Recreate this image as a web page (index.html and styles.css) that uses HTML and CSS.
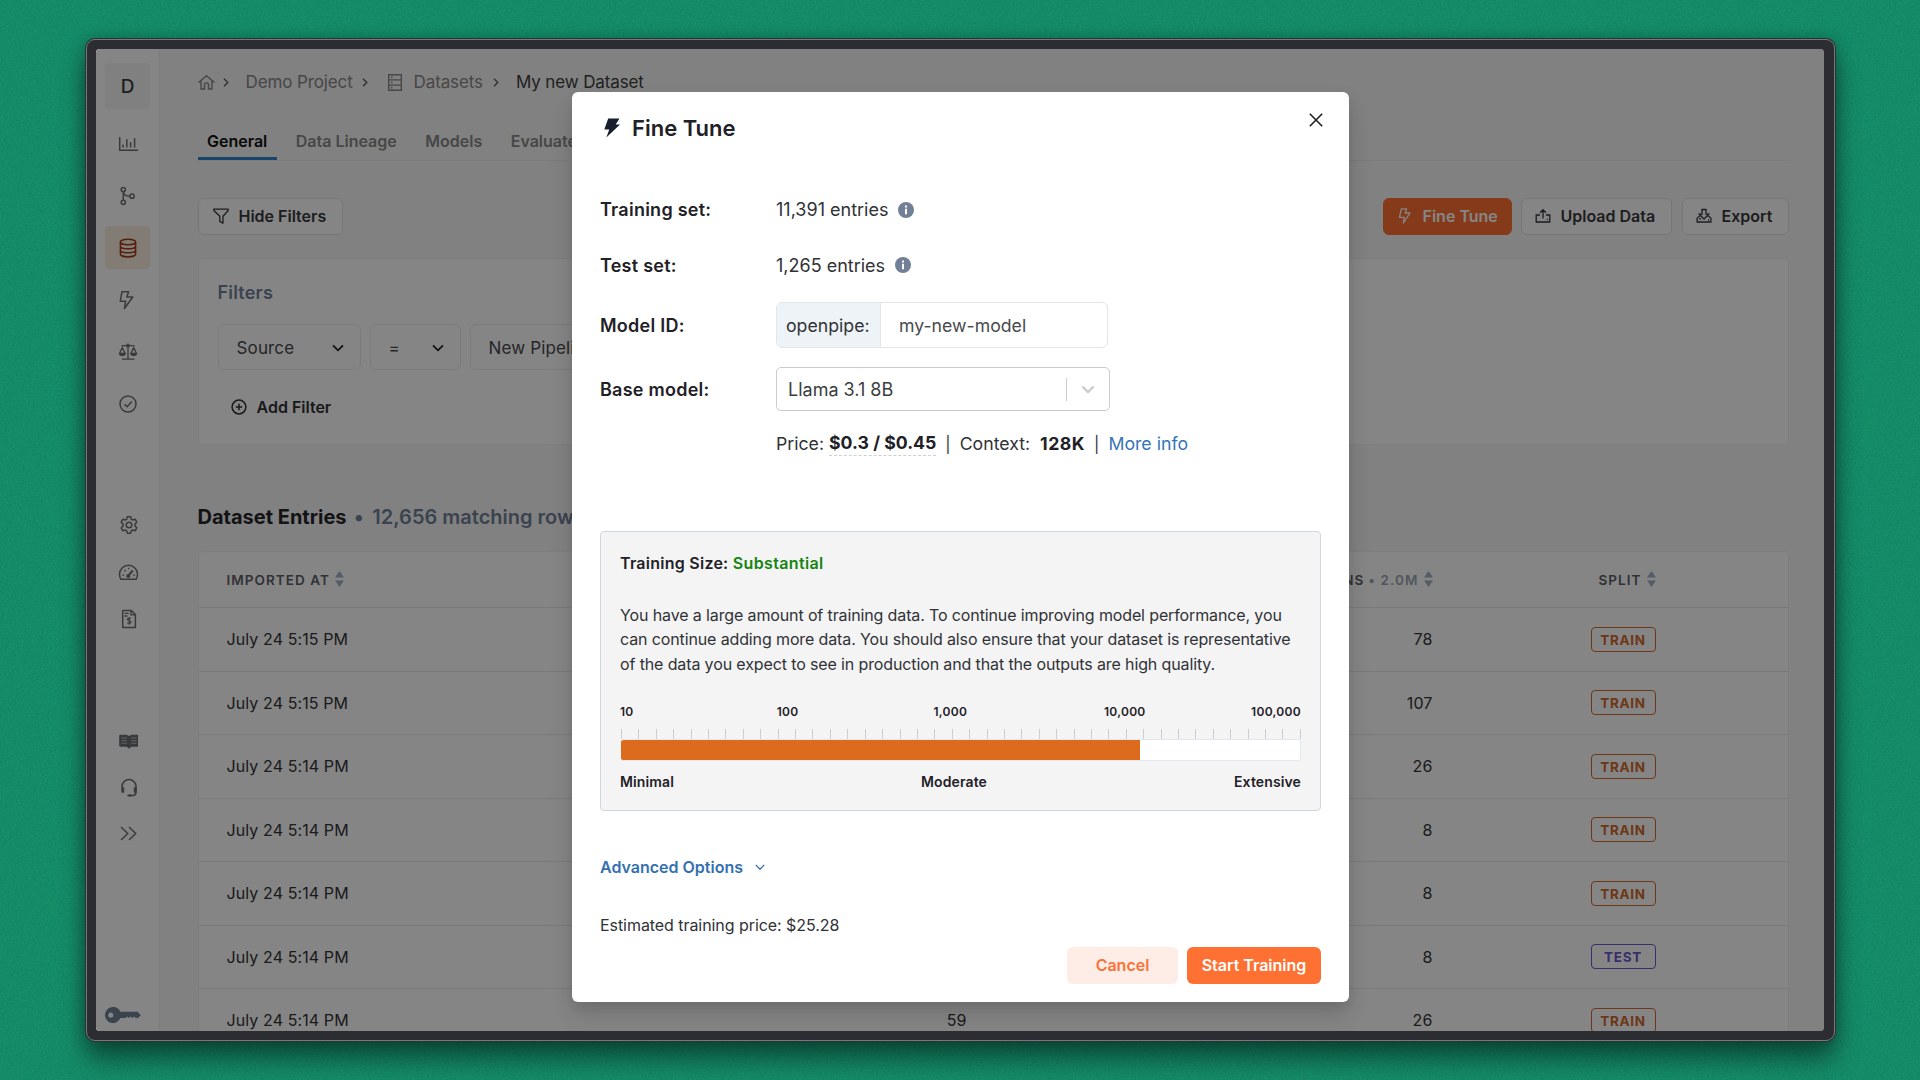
FILE: index.html
```html
<!DOCTYPE html>
<html lang="en">
<head>
    <meta charset="UTF-8">
    <meta name="viewport" content="width=device-width, initial-scale=1.0">
    <title>My new Dataset</title>
    <link rel="stylesheet" href="styles.css">
</head>
<body>
    <svg class="grain" width="1920" height="1080">
        <filter id="noise"><feTurbulence type="fractalNoise" baseFrequency="0.6" numOctaves="2"/><feColorMatrix type="matrix" values="0 0 0 0 0  0 0 0 0 0  0 0 0 0 0  1.2 0 0 0 -0.3"/></filter>
        <rect width="1920" height="1080" filter="url(#noise)"/>
    </svg>

    <div class="window">
        <div class="screen">
            <!-- Sidebar -->
            <nav class="sidebar">
                <div class="project-initial">D</div>
                <div class="nav-group nav-main">
                    <a class="nav-item"><svg viewBox="0 0 20 20"><path d="M1.7 3v13.2H20" /><path d="M5 13.5v-3M8.8 13.5V5.2M12.6 13.5V8.2M16.6 13.5V4"/></svg></a>
                    <a class="nav-item"><svg viewBox="0 0 20 20"><circle cx="5.3" cy="3.6" r="2.1"/><circle cx="5.3" cy="16.3" r="2.1"/><circle cx="14" cy="10.2" r="2.1"/><path d="M5.3 5.7v8.5M5.5 6c.4 3 2.5 4.2 6.3 4.2"/></svg></a>
                    <a class="nav-item active"><svg viewBox="0 0 20 20"><ellipse cx="10" cy="4" rx="7.6" ry="2.8"/><path d="M2.4 4v12c0 1.6 3.4 2.9 7.6 2.9s7.6-1.3 7.6-2.9V4M2.4 8c0 1.6 3.4 2.8 7.6 2.8s7.6-1.2 7.6-2.8M2.4 12c0 1.6 3.4 2.8 7.6 2.8s7.6-1.2 7.6-2.8"/></svg></a>
                    <a class="nav-item"><svg viewBox="0 0 20 20"><path d="M4 1.7h6.6L8.8 7H14.800L6.500 18.500 7.600 11.300H2.200z" stroke-linejoin="round"/></svg></a>
                    <a class="nav-item"><svg viewBox="0 0 20 20"><path d="M3.500 3.700H16.500M10 3.700V17M4 17.200h12.500" stroke-width="1.300"/><circle cx="10" cy="3.500" r="1.300" stroke-width="1.200"/><path d="M4.300 5.500 1.500 11.500h5.600zM15.700 5.500l-2.800 6h5.600z" stroke-width="1.300"/><path d="M.9 11.200h6.800c-.2 1.900-1.500 2.900-3.400 2.900s-3.200-1-3.400-2.900zM12.300 11.200h6.800c-.2 1.900-1.500 2.900-3.400 2.900s-3.200-1-3.400-2.900z" fill="currentColor" stroke="none"/></svg></a>
                    <a class="nav-item"><svg viewBox="0 0 20 20"><circle cx="10" cy="10" r="8"/><path d="m6.500 10.200 2.600 2.500 4.700-5.200"/></svg></a>
                </div>
                <div class="nav-group nav-settings">
                    <a class="nav-item"><svg viewBox="0 0 20 20"><circle cx="11" cy="10" r="2.800"/><path d="M9.300 1.800h3.400l.5 2.300 1.500.9 2.400-.8 1.700 3-1.800 1.700v2.200l1.800 1.700-1.700 3-2.400-.8-1.500.9-.5 2.300H9.300l-.5-2.300-1.500-.9-2.400.8-1.700-3L5 11.100V8.900L3.200 7.200l1.700-3 2.400.8 1.500-.9z" stroke-linejoin="round"/></svg></a>
                    <a class="nav-item"><svg viewBox="0 0 20 20"><path d="M2.900 17.300C2 15.800 1.500 14.200 1.500 12.300a9 9 0 0 1 18 0c0 1.900-.5 3.500-1.400 5z" stroke-linejoin="round"/><path d="m10.500 13.500 4.300-5" stroke-width="2"/><circle cx="10.300" cy="14" r="1.300" fill="currentColor"/><path d="M4.500 13.200h1.500M15.500 13.200H17M6.300 8.700h1.500M10 6.500h1.300" stroke-width="1.600"/></svg></a>
                    <a class="nav-item"><svg viewBox="0 0 20 20"><path d="M4.700 1.500h8.600l4.100 4.100v12.900H4.700z" stroke-linejoin="round"/><path d="M13 1.500v4.300h4.400M6.500 4.300h4.200M6.500 7h3" stroke-width="1.300"/><path d="M12.900 9.600c-1-.8-3.400-.7-3.400.8 0 1.600 3.500 1 3.500 2.700 0 1.500-2.600 1.600-3.700.6M11.200 8.300v7.400" stroke-width="1.200"/></svg></a>
                </div>
                <div class="nav-group nav-help">
                    <a class="nav-item"><svg viewBox="0 0 20 20"><path d="M2.500 3.700h6.300L11 5l2.200-1.300h6.300c.7 0 1.300.5 1.300 1.200v9.600c0 .8-.5 1.200-1.300 1.200h-6.200L11 17.800l-2.300-2.100H2.500c-.8 0-1.300-.4-1.300-1.200V4.900c0-.7.500-1.200 1.300-1.200z" fill="currentColor" stroke="none"/><path d="M3.500 7h5.300M3.500 9.600h5.300M3.500 12.200h5.300M13.200 7h5.300M13.200 9.600h5.300M13.200 12.200h5.300" class="book-lines"/></svg></a>
                    <a class="nav-item"><svg viewBox="0 0 20 20"><path d="M4 10V8.600c0-4 3.200-7 7-7s7 3 7 7v5.700c0 2-1 3.200-3.500 3.200H11"/><path d="M3.300 9.300h2.900v5.500H4.500c-.8 0-1.200-.6-1.200-1.200zM15.800 9.300h2.900v4.300c0 .6-.5 1.200-1.200 1.200h-1.700zM9.500 16.600h4v1.800h-4z" fill="currentColor" stroke="none"/></svg></a>
                    <a class="nav-item expand"><svg viewBox="0 0 20 20"><path d="m3 4 6.700 6.500L3 17M11 4l6.700 6.500L11 17"/></svg></a>
                </div>
                <svg class="key" viewBox="0 0 36 16"><path d="M8 0a8 8 0 0 1 7.400 4.800H32.500L35.800 8.300 33 11h-2.200l-1.600-1.500L27.500 11l-1.800-1.500L24 11l-1.800-1.500L20.400 11h-5A8 8 0 1 1 8 0zM5.800 5.600a2.600 2.600 0 1 0 .01 0z" fill-rule="evenodd"/></svg>
            </nav>

            <main class="content">
                <div class="breadcrumbs">
                    <svg class="home" viewBox="0 0 17 15"><path d="m.6 7.500 7.900-6.800 7.900 6.800M3 6v8h3.500V9.800c0-2.600 4-2.600 4 0V14H14V6" /></svg>
                    <svg class="sep" viewBox="0 0 6 9"><path d="m1 .7 3.800 3.800L1 8.300"/></svg>
                    <span class="crumb crumb-project">Demo Project</span>
                    <svg class="sep" viewBox="0 0 6 9"><path d="m1 .7 3.800 3.800L1 8.300"/></svg>
                    <svg class="list" viewBox="0 0 14 17"><path d="M.7.7h12.600v15.600H.7zM.7 5.900h12.600M.7 11.100h12.600M3 3.300h1.500M3 8.500h1.500M3 13.700h1.500"/></svg>
                    <span class="crumb crumb-datasets">Datasets</span>
                    <svg class="sep" viewBox="0 0 6 9"><path d="m1 .7 3.800 3.800L1 8.300"/></svg>
                    <span class="crumb crumb-current">My new Dataset</span>
                </div>

                <div class="tabs">
                    <a class="tab selected">General</a>
                    <a class="tab">Data Lineage</a>
                    <a class="tab">Models</a>
                    <a class="tab">Evaluate</a>
                </div>

                <div class="toolbar">
                    <button class="btn hide-filters"><svg viewBox="0 0 16 16"><path d="M.8 1.200h14.400v1.300L10 8.300v6.800l-3.200-1.500V8.300L.8 2.500z" stroke-linejoin="round"/></svg>Hide Filters</button>
                    <div class="toolbar-actions">
                        <button class="btn btn-primary"><svg viewBox="0 0 16 16"><path d="M4.300.8h5.300L8.200 5h4.800L6.400 15l.9-5.600H2.500z" stroke-linejoin="round"/></svg>Fine Tune</button>
                        <button class="btn upload"><svg viewBox="0 0 16 16"><path d="M5 7H1.200v7h13.600V7H11M8 10.500V2M5 4.700 8 1.700l3 3M11.800 11.500h1"/></svg>Upload Data</button>
                        <button class="btn export"><svg viewBox="0 0 16 16"><path d="M4.500 7.500 1.100 10v4h13.800v-4l-3.400-2.500M6 1.500h4v4.700h2.700L8 11 3.300 6.200H6zM12 12h1M3 10.800h2.200"/></svg>Export</button>
                    </div>
                </div>

                <section class="card filters">
                    <h3>Filters</h3>
                    <div class="filter-row">
                        <div class="filter-select source">Source<svg viewBox="0 0 12 8"><path d="m1 1.300 5 5 5-5"/></svg></div>
                        <div class="filter-select equals">=<svg viewBox="0 0 12 8"><path d="m1 1.300 5 5 5-5"/></svg></div>
                        <div class="filter-select pipeline">New Pipeline</div>
                    </div>
                    <a class="add-filter"><svg viewBox="0 0 16 16"><circle cx="8" cy="8" r="6.900"/><path d="M8 4.800v6.400M4.800 8h6.400"/></svg>Add Filter</a>
                </section>

                <h2 class="entries-title">Dataset Entries <span class="muted"><i>•</i> 12,656 matching rows</span></h2>

                <section class="card table">
                    <div class="row table-head">
                        <span class="date">IMPORTED AT<svg class="sort" viewBox="0 0 9 16"><path d="M4.500 0 9 6.500H0zM4.500 16 0 9.500h9z"/></svg></span>
                        <span></span>
                        <span class="output">OUTPUT TOKENS<em><i>•</i> 2.0M</em><svg class="sort" viewBox="0 0 9 16"><path d="M4.500 0 9 6.500H0zM4.500 16 0 9.500h9z"/></svg></span>
                        <span class="split">SPLIT<svg class="sort" viewBox="0 0 9 16"><path d="M4.500 0 9 6.500H0zM4.500 16 0 9.500h9z"/></svg></span>
                    </div>
                    <div class="row"><span>July 24 5:15 PM</span><span></span><span>78</span><span><b class="badge">TRAIN</b></span></div>
                    <div class="row"><span>July 24 5:15 PM</span><span></span><span>107</span><span><b class="badge">TRAIN</b></span></div>
                    <div class="row"><span>July 24 5:14 PM</span><span></span><span>26</span><span><b class="badge">TRAIN</b></span></div>
                    <div class="row"><span>July 24 5:14 PM</span><span></span><span>8</span><span><b class="badge">TRAIN</b></span></div>
                    <div class="row"><span>July 24 5:14 PM</span><span></span><span>8</span><span><b class="badge">TRAIN</b></span></div>
                    <div class="row"><span>July 24 5:14 PM</span><span></span><span>8</span><span><b class="badge test">TEST</b></span></div>
                    <div class="row"><span>July 24 5:14 PM</span><span>59</span><span>26</span><span><b class="badge">TRAIN</b></span></div>
                </section>
            </main>

            <!-- Fine tune modal -->
            <div class="overlay">
                <div class="modal">
                    <div class="modal-header">
                        <svg class="bolt" viewBox="0 0 16 20"><path d="M4.200.5H15.500L11.700 6.500H16L2.300 19.500 5.300 11.500H.3z"/></svg>
                        <h1>Fine Tune</h1>
                        <svg class="close" viewBox="0 0 14 14"><path d="m.8.8 12.400 12.400M13.200.8.8 13.200"/></svg>
                    </div>

                    <div class="form">
                        <div class="field set"><label>Training set:</label><span class="train-count">11,391 entries</span><svg class="info" viewBox="0 0 16 16"><circle cx="8" cy="8" r="8"/><path d="M7 3.500h2v2H7zM7 6.800h2v5.500H7z"/></svg></div>
                        <div class="field set"><label>Test set:</label><span class="test-count">1,265 entries</span><svg class="info" viewBox="0 0 16 16"><circle cx="8" cy="8" r="8"/><path d="M7 3.500h2v2H7zM7 6.800h2v5.500H7z"/></svg></div>
                        <div class="field model-id"><label>Model ID:</label><div class="input-group"><span class="addon">openpipe:</span><span class="input">my-new-model</span></div></div>
                        <div class="field base-model"><label>Base model:</label><div class="select"><span>Llama 3.1 8B</span><div class="indicator"><svg viewBox="0 0 14 9"><path d="m1.500 1.500 5.500 5.500 5.500-5.500"/></svg></div></div></div>
                        <div class="pricing"><span>Price:</span><b class="price">$0.3 / $0.45</b><span class="bar">|</span><span class="context">Context:</span><b class="tokens">128K</b><span class="bar">|</span><a class="more">More info</a></div>
                    </div>

                    <div class="training-size">
                        <h4>Training Size: <span>Substantial</span></h4>
                        <p>You have a large amount of training data. To continue improving model performance, you<br>can continue adding more data. You should also ensure that your dataset is representative<br>of the data you expect to see in production and that the outputs are high quality.</p>
                        <div class="scale"><span>10</span><span>100</span><span>1,000</span><span>10,000</span><span>100,000</span></div>
                        <div class="ticks"></div>
                        <div class="progress"><div class="progress-fill" style="width: 76.4%"></div></div>
                        <div class="levels"><span>Minimal</span><span>Moderate</span><span>Extensive</span></div>
                    </div>

                    <a class="advanced">Advanced Options<svg viewBox="0 0 10 7"><path d="m.8.9 4.200 4.300L9.200.9"/></svg></a>
                    <div class="estimate">Estimated training price: $25.28</div>
                    <div class="modal-footer">
                        <button class="cancel">Cancel</button>
                        <button class="start">Start Training</button>
                    </div>
                </div>
            </div>
        </div>
    </div>

    <script>
        // ruler above the progress bar
        const ticks = document.querySelector(".ticks");
        for (let i = 0; i < 40; i++) {
            ticks.appendChild(document.createElement("i"));
        }
    </script>
</body>
</html>
```
FILE: styles.css
```css
* {
    box-sizing: border-box;
}

body {
    margin: 0;
    width: 1920px;
    height: 1080px;
    overflow: hidden;
    background-color: #16926d;
    font-family: Inter, "Liberation Sans", sans-serif;
    color: #1f2127;
}

h1, h2, h3, h4, p {
    margin: 0;
}

button {
    font-family: inherit;
}

svg {
    flex: none;
    fill: none;
    stroke: currentColor;
}

.grain {
    position: absolute;
    opacity: 0.15;
    stroke: none;
}

/* Window frame */
.window {
    position: relative;
    width: 1749px;
    height: 1002px;
    margin: 39px 0 0 86px;
    padding: 9px 10px 9px 9px;
    background-color: #2c2d32;
    border: 1px solid #77787b;
    border-radius: 9px;
    box-shadow: 0 0 0 1px #24362f, 0 18px 26px rgba(0, 0, 0, 0.45), 0 0 16px rgba(0, 0, 0, 0.25);
}

.screen {
    position: relative;
    display: flex;
    height: 982px;
    overflow: hidden;
    border-radius: 4px;
    background-color: #f7f7f7;
}

/* Sidebar */
.sidebar {
    display: flex;
    flex-direction: column;
    flex: none;
    width: 64px;
    padding: 14px 9px 8px;
    background-color: #fff;
    border-right: 1px solid #f0f0f0;
    color: #6e7073;
}

.project-initial {
    height: 46px;
    width: 45px;
    line-height: 47px;
    text-align: center;
    font-size: 19px;
    font-weight: 500;
    color: #3b3b3d;
    background-color: #f5f5f5;
    border-radius: 4px;
}

.nav-item {
    display: flex;
    align-items: center;
    justify-content: center;
    width: 45px;
    height: 47.3px;
}

.nav-item svg {
    width: 20px;
    height: 20px;
    stroke-width: 1.5;
}

.nav-main {
    display: grid;
    gap: 9px;
    margin-top: 13px;
}

.nav-main .nav-item {
    height: 43px;
    border-radius: 4px;
}

.nav-main .nav-item.active {
    color: #a03a18;
    background-color: #fbeee0;
}

.nav-settings {
    margin-top: 76px;
}

.nav-help {
    margin-top: 74px;
}

.nav-item .book-lines {
    stroke: #bbb;
    stroke-width: 1;
}

.expand {
    height: 44px;
}

.key {
    width: 36px;
    height: 16px;
    margin-top: auto;
    fill: #718096;
    stroke: none;
}

/* Page content */
.content {
    flex: 1;
    padding: 21px 35.500px 0 37.500px;
}

.breadcrumbs {
    display: flex;
    align-items: center;
    height: 24px;
    font-size: 17px;
    letter-spacing: -0.12px;
    color: #888;
}

.breadcrumbs svg {
    stroke-width: 1.4;
}

.home {
    width: 17px;
    height: 15px;
    margin-right: 8px;
}

.sep {
    width: 6px;
    height: 9px;
    color: #606060;
}

.crumb-project {
    margin: 0 9px 0 17px;
}

.list {
    width: 14px;
    height: 17px;
    margin: 0 12px 0 20px;
}

.crumb-datasets {
    margin-right: 10px;
}

.crumb-current {
    margin-left: 17px;
    color: #3f3f3f;
}

.tabs {
    display: flex;
    gap: 9.500px;
    height: 46px;
    margin-top: 21px;
    border-bottom: 1px solid #ececec;
    font-size: 16px;
    font-weight: 600;
    color: #898989;
}

.tab {
    padding: 16px 9.500px 0;
}

.tab.selected {
    color: #111;
    border-bottom: 3px solid #3182ce;
}

.toolbar, .toolbar-actions {
    display: flex;
    justify-content: space-between;
}

.toolbar {
    margin-top: 37px;
}

.btn {
    display: flex;
    align-items: center;
    gap: 10px;
    height: 37px;
    padding: 0 13px 1px;
    font-size: 16px;
    font-weight: 600;
    color: #38393d;
    background-color: #fff;
    border: 1px solid #e0e0e0;
    border-radius: 6px;
    white-space: nowrap;
}

.btn svg {
    width: 16px;
    height: 16px;
    stroke-width: 1.3;
}

.hide-filters {
    width: 145px;
    padding-left: 14px;
}

.btn-primary {
    width: 129px;
    color: #fff;
    background-color: #ff7033;
    border-color: #ff7033;
    margin-right: 9px;
}

.upload {
    width: 151px;
    margin-right: 10px;
}

.export {
    width: 107px;
}

.card {
    background-color: #fff;
    border: 1px solid #f0f0f0;
    border-radius: 5px;
}

.filters {
    height: 187px;
    margin-top: 23px;
    padding: 22px 19px 0;
}

.filters h3 {
    font-size: 18px;
    line-height: 24px;
    font-weight: 600;
    letter-spacing: 0.2px;
    color: #718096;
}

.filter-row {
    display: flex;
    gap: 9px;
    margin-top: 19px;
}

.filter-select {
    display: flex;
    align-items: center;
    justify-content: space-between;
    height: 46px;
    padding: 1px 16px 0 18px;
    border: 1px solid #ececec;
    border-radius: 6px;
    font-size: 17px;
    letter-spacing: 0.15px;
    color: #48494c;
}

.filter-select svg {
    width: 12px;
    height: 8px;
    stroke: #222;
    stroke-width: 1.8;
}

.source {
    width: 143px;
}

.equals {
    width: 91px;
}

.pipeline {
    width: 200px;
}

.add-filter {
    display: flex;
    align-items: center;
    gap: 10px;
    margin: 24px 0 0 13px;
    font-size: 16px;
    line-height: 26px;
    font-weight: 600;
    color: #303135;
}

.add-filter svg {
    width: 16px;
    height: 16px;
    stroke-width: 1.5;
}

.entries-title {
    margin-top: 58px;
    font-size: 20px;
    line-height: 28px;
    font-weight: 700;
    color: #25262a;
}

.entries-title .muted {
    font-weight: 600;
    color: #718096;
}

i {
    font-style: normal;
}

.entries-title i {
    margin: 0 3.500px 0 2.500px;
}

.table {
    margin-top: 20px;
    border-bottom: none;
    border-radius: 5px 5px 0 0;
}

.row {
    display: grid;
    grid-template-columns: 400px 340px 466px 223px;
    align-items: center;
    height: 63.5px;
    padding-left: 28px;
    border-bottom: 1px solid #e7e9ec;
    font-size: 16px;
    letter-spacing: 0.1px;
    color: #333438;
}

.row > span {
    text-align: right;
}

.row > span:first-child {
    text-align: left;
}

.table-head {
    height: 56px;
    font-size: 13.500px;
    font-weight: 600;
    letter-spacing: 1.05px;
    color: #5d6065;
}

.table-head em {
    margin-left: 4px;
    font-style: normal;
    color: #9aa5b1;
}

.sort {
    width: 9px;
    height: 16px;
    margin-left: 5px;
    fill: #a0aec0;
    stroke: none;
    vertical-align: -2px;
}

.badge {
    display: inline-block;
    width: 65px;
    height: 25px;
    line-height: 24px;
    text-align: center;
    font-size: 13.500px;
    letter-spacing: 0.7px;
    font-weight: 700;
    color: #d36a2c;
    border: 1px solid #d36a2c;
    border-radius: 4px;
}

.badge.test {
    color: #6b5bd0;
    border-color: #6b5bd0;
}

/* Modal */
.overlay {
    position: absolute;
    inset: 0;
    display: flex;
    align-items: flex-start;
    padding: 43px 0 0 476px;
    background-color: rgba(0, 0, 0, 0.48);
}

.modal {
    width: 777px;
    height: 910px;
    padding: 0 28px;
    background-color: #fff;
    border-radius: 6px;
    box-shadow: 0 12px 22px rgba(0, 0, 0, 0.15), 0 5px 8px rgba(0, 0, 0, 0.05);
}

.modal-header {
    display: flex;
    align-items: center;
    height: 72px;
}

.modal-header h1 {
    flex: 1;
    margin-left: 12px;
    font-size: 22px;
    font-weight: 600;
}

.bolt {
    width: 16px;
    height: 20px;
    margin-left: 4px;
    fill: #17202c;
    stroke: none;
}

.close {
    width: 14px;
    height: 14px;
    margin: -17px -2px 0 0;
    stroke-width: 1.6;
}

.form {
    padding-top: 18px;
    font-size: 18px;
    color: #303236;
}

.field {
    display: flex;
    align-items: center;
}

.field label {
    width: 176px;
    font-weight: 600;
    letter-spacing: 0.25px;
    color: #1f2127;
}

.set {
    height: 55.500px;
}

.info {
    width: 16px;
    height: 16px;
    margin-left: 10px;
    stroke: none;
}

.info circle {
    fill: #718096;
}

.info path {
    fill: #fff;
}

.model-id {
    margin-top: 9px;
}

.input-group {
    display: flex;
    width: 332px;
    height: 46px;
    line-height: 45px;
    border: 1px solid #e3e6e9;
    border-radius: 6px;
    font-size: 17.700px;
}

.addon {
    width: 104px;
    padding-left: 9px;
    background-color: #edf3f6;
    border-right: 1px solid #e3e6e9;
    border-radius: 5px 0 0 5px;
}

.input {
    padding-left: 18px;
    color: #48494c;
}

.base-model {
    margin-top: 19px;
}

.select {
    display: flex;
    align-items: center;
    justify-content: space-between;
    width: 334px;
    height: 44px;
    padding-left: 11px;
    border: 1px solid #ccc;
    border-radius: 5px;
    color: #3b3c40;
}

.indicator {
    display: flex;
    align-items: center;
    height: 23px;
    padding: 0 14px;
    border-left: 1px solid #ccc;
}

.indicator svg {
    width: 14px;
    height: 9px;
    stroke: #ccc;
    stroke-width: 2.400;
}

.pricing {
    display: flex;
    align-items: center;
    margin: 20px 0 0 176px;
    font-size: 17.700px;
    line-height: 24px;
    white-space: nowrap;
}

.pricing b {
    font-weight: 700;
    color: #1f2127;
}

.price {
    margin-left: 5px;
    border-bottom: 1px dashed #cbd0d8;
}

.bar {
    margin: 0 9px;
    font-size: 16px;
}

.pricing .tokens {
    margin-left: 10px;
    letter-spacing: 0.5px;
}

.more {
    color: #3574b8;
}

.training-size {
    height: 280px;
    margin-top: 75px;
    padding: 19px 19px 0;
    background-color: #f4f4f5;
    border: 1px solid #cfd8df;
    border-radius: 4px;
}

.training-size h4 {
    font-size: 16px;
    line-height: 24px;
    font-weight: 600;
    letter-spacing: 0.25px;
}

.training-size h4 span {
    color: #158410;
    letter-spacing: 0.35px;
}

.training-size p {
    margin-top: 28px;
    font-size: 16px;
    line-height: 24.300px;
    letter-spacing: -0.125px;
    white-space: nowrap;
    color: #303236;
}

.scale {
    display: grid;
    grid-template-columns: 156.700px 156.700px 170.500px 1fr auto;
    margin-top: 28px;
    font-size: 12px;
    line-height: 16px;
    font-weight: 600;
    letter-spacing: 0.3px;
}

.ticks {
    display: flex;
    justify-content: space-between;
    height: 10px;
    margin: 9px 0 0 1px;
}

.ticks i {
    width: 1px;
    background-color: #c9cfd6;
}

.progress {
    height: 22px;
    margin-left: 1px;
    overflow: hidden;
    background-color: #fff;
    border: 1px solid #e2e8ee;
    border-left: none;
    border-radius: 3px;
}

.progress-fill {
    height: 100%;
    background-color: #dd6b1d;
}

.levels {
    display: flex;
    justify-content: space-between;
    margin-top: 12px;
    font-size: 14px;
    line-height: 18px;
    font-weight: 600;
    letter-spacing: 0.12px;
}

.advanced {
    display: flex;
    align-items: center;
    gap: 12px;
    margin-top: 44px;
    font-size: 16px;
    line-height: 24px;
    font-weight: 600;
    color: #3470b0;
}

.advanced svg {
    width: 10px;
    height: 7px;
    stroke-width: 1.3;
}

.estimate {
    margin-top: 34px;
    font-size: 16px;
    line-height: 24px;
    letter-spacing: -0.06px;
    color: #303236;
}

.modal-footer {
    display: flex;
    justify-content: flex-end;
    gap: 9px;
    margin-top: 10px;
}

.modal-footer button {
    height: 37px;
    padding: 0 0 1px;
    border: none;
    border-radius: 6px;
    font-size: 16px;
    font-weight: 600;
}

.cancel {
    width: 111px;
    color: #f97338;
    background-color: #feede6;
}

.start {
    width: 134px;
    color: #fff;
    background-color: #ff7033;
}
```
